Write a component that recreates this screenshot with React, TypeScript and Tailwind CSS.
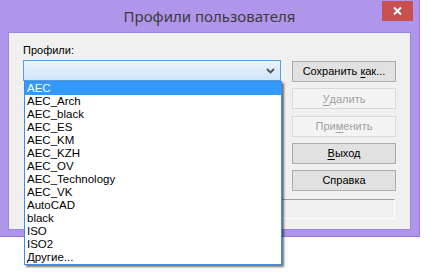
const profiles = [
  "AEC",
  "AEC_Arch",
  "AEC_black",
  "AEC_ES",
  "AEC_KM",
  "AEC_KZH",
  "AEC_OV",
  "AEC_Technology",
  "AEC_VK",
  "AutoCAD",
  "black",
  "ISO",
  "ISO2",
  "Другие...",
];

type Btn = {
  pre: string;
  acc?: string;
  post?: string;
  disabled?: boolean;
};

const buttons: Btn[] = [
  { pre: "Сохранить ", acc: "к", post: "ак..." },
  { pre: "", acc: "У", post: "далить", disabled: true },
  { pre: "При", acc: "м", post: "енить", disabled: true },
  { pre: "", acc: "В", post: "ыход" },
  { pre: "Справка" },
];

const DialogButton = ({ pre, acc, post, disabled }: Btn) => (
  <div
    className={`flex h-[21px] w-[104px] items-center justify-center whitespace-pre border ${
      disabled
        ? "border-[#d9d9d9] bg-[#f4f4f4] text-[#a0a0a0]"
        : "border-[#adadad] bg-[#e1e1e1] text-black"
    }`}
  >
    {pre}
    {acc && <span className="underline underline-offset-2">{acc}</span>}
    {post}
  </div>
);

export default function App() {
  return (
    <div
      className="relative h-[273px] w-[431px] overflow-hidden bg-white text-[11px]"
      style={{ fontFamily: '"Liberation Sans", Arial, sans-serif' }}
    >
      {/* window frame */}
      <div className="flex h-[237px] w-[420px] flex-col border-r border-b border-[#9479d6] bg-[#af96ea]">
        <div className="relative flex h-[32px] items-center justify-center">
          <span
            className="text-[15px] text-[#3c3c3c]"
            style={{ fontFamily: '"Noto Sans", sans-serif' }}
          >
            Профили пользователя
          </span>
          <div className="absolute top-[1px] right-[6px] flex h-[20px] w-[31px] items-center justify-center bg-[#c75050]">
            <svg width="9" height="8" viewBox="0 0 9 8">
              <path d="M1 0.5 L8 7.5 M8 0.5 L1 7.5" stroke="white" strokeWidth="2" />
            </svg>
          </div>
        </div>

        <div className="mx-[8px] flex h-[198px] flex-col border border-[#9c85dc] bg-[#f0f0f0] px-[14px]">
          <div className="flex gap-[11px]">
            <div className="flex w-[258px] flex-col">
              <div className="mt-[9px] h-[18px] text-black">Профили:</div>
              <div className="flex h-[21px] items-center justify-end border border-[#569de5] bg-gradient-to-b from-[#ecf4fc] to-[#cfe4fa] pr-[5px]">
                <svg width="9" height="6" viewBox="0 0 9 6">
                  <path d="M1 1 L4.5 4.5 L8 1" fill="none" stroke="#505050" strokeWidth="1.8" />
                </svg>
              </div>
            </div>
            <div className="mt-[28px] flex flex-col gap-[6.3px]">
              {buttons.map((b, i) => (
                <DialogButton key={i} {...b} />
              ))}
            </div>
          </div>
          <div className="mt-[8px] mr-[1px] ml-[4px] h-[20px] border border-t-[#a0a0a0] border-r-white border-b-white border-l-[#a0a0a0]" />
        </div>
      </div>

      {/* open dropdown list */}
      <div className="absolute top-[81px] left-[24px] w-[258px] border border-[#3a8ee6] bg-white text-[11.5px] shadow-[2px_2px_2px_rgba(0,0,0,0.55)]">
        {profiles.map((p, i) => (
          <div
            key={p}
            className={`h-[13px] pl-[2px] leading-[13px] ${
              i === 0 ? "bg-[#3399ff] text-white" : "text-black"
            }`}
          >
            {p}
          </div>
        ))}
      </div>
    </div>
  );
}
